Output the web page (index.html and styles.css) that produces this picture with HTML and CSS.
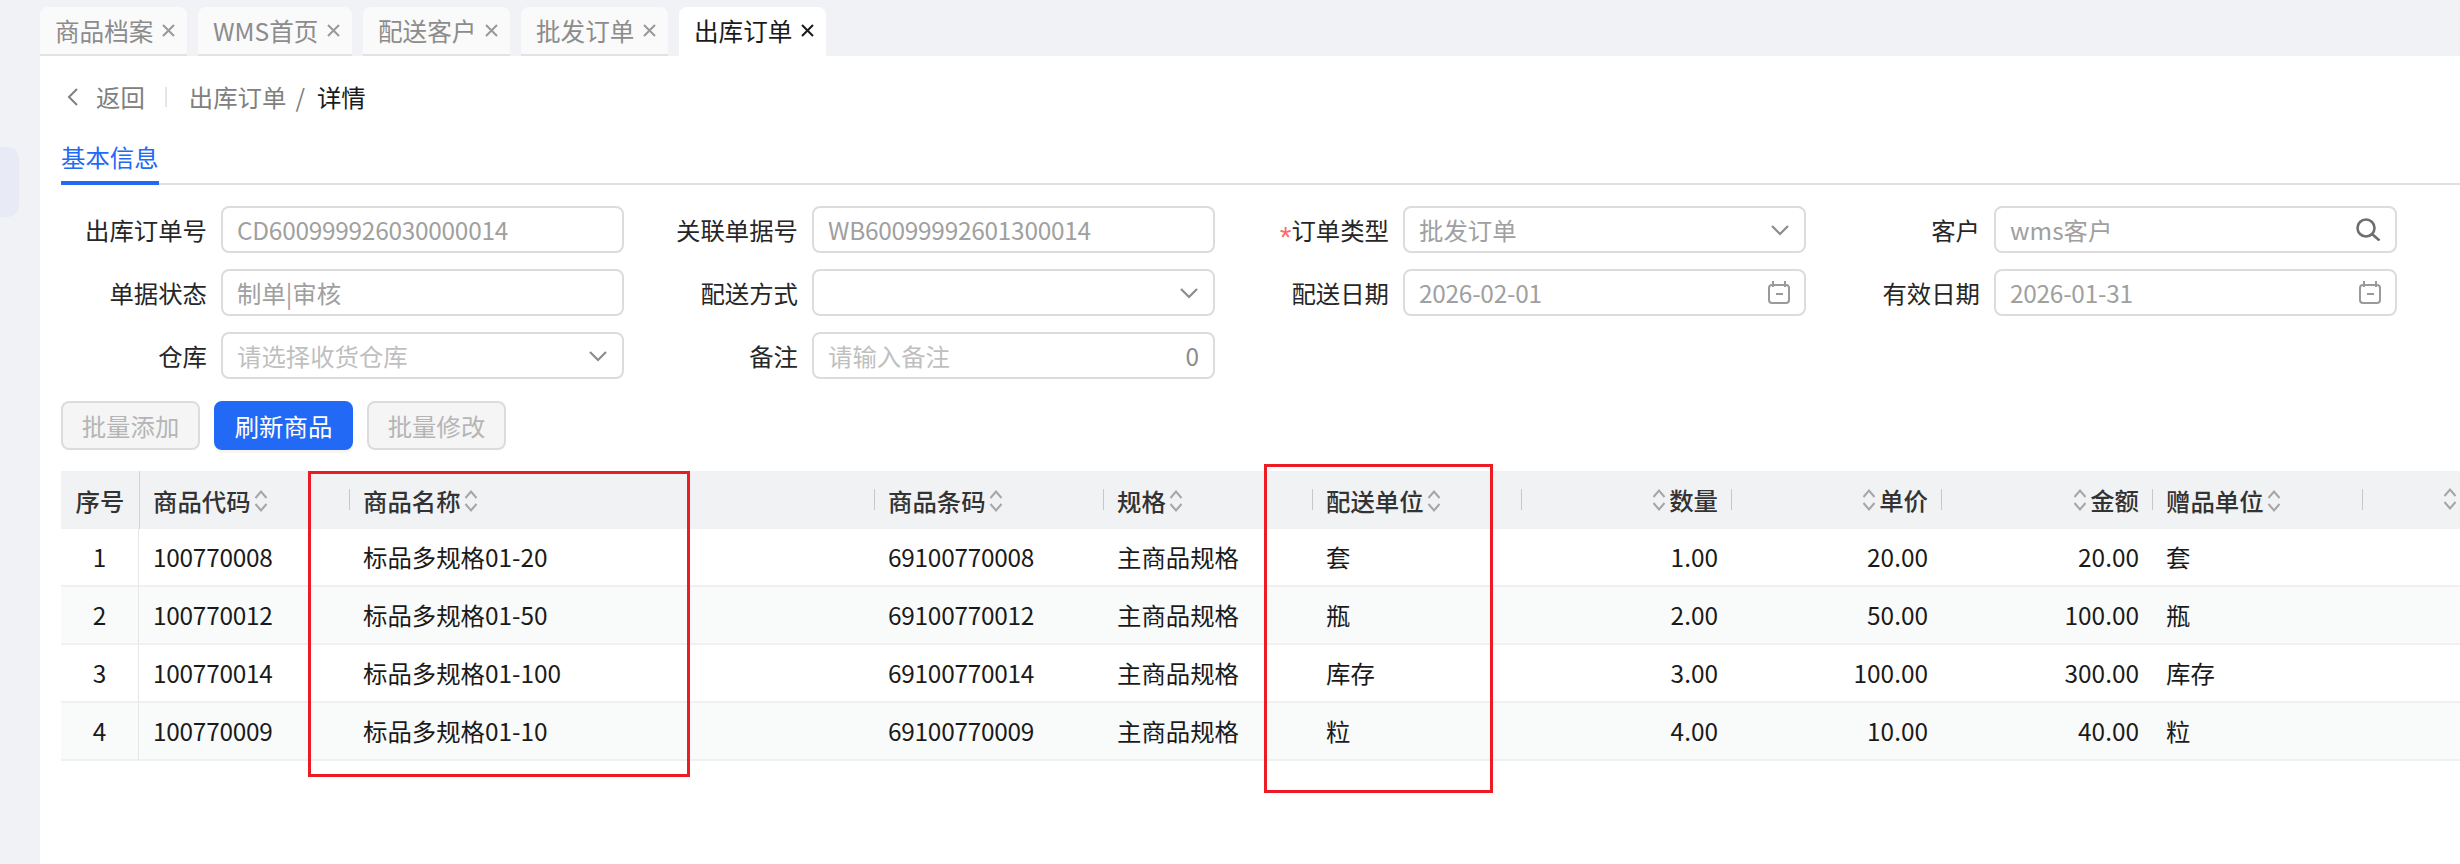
FILE: index.html
```html
<!DOCTYPE html>
<html lang="zh-CN">
<head>
<meta charset="utf-8">
<title>出库订单</title>
<link rel="stylesheet" href="styles.css">
</head>
<body>
<svg class="defs" width="0" height="0" aria-hidden="true">
  <symbol id="x" viewBox="0 0 13 13"><path d="M1 1l11 11M12 1L1 12" fill="none" stroke="currentColor" stroke-width="2"/></symbol>
  <symbol id="chev" viewBox="0 0 20 12"><path d="M2 2l8 8 8-8" fill="none" stroke="currentColor" stroke-width="2.200"/></symbol>
  <symbol id="cal" viewBox="0 0 22 23"><path d="M5 0v6M17 0v6" fill="none" stroke="currentColor" stroke-width="2"/><rect x="1" y="4" width="20" height="18" rx="3" fill="none" stroke="currentColor" stroke-width="2"/><path d="M8 13h7" stroke="currentColor" stroke-width="2"/></symbol>
  <symbol id="search" viewBox="0 0 25 23"><circle cx="10" cy="10" r="8.500" fill="none" stroke="currentColor" stroke-width="2.600"/><path d="M16.500 16.500l7 6" fill="none" stroke="currentColor" stroke-width="2.600"/></symbol>
  <symbol id="sort" viewBox="0 0 14 24"><path d="M1.500 9L7 2.500 12.500 9M1.500 15L7 21.500 12.500 15" fill="none" stroke="currentColor" stroke-width="2"/></symbol>
</svg>
<div class="app">
  <aside class="rail"><div class="rail-card"></div></aside>
  <main class="main">
    <nav class="tabs">
      <div class="tab">商品档案<svg class="tab-x"><use href="#x"/></svg></div>
      <div class="tab">WMS首页<svg class="tab-x"><use href="#x"/></svg></div>
      <div class="tab">配送客户<svg class="tab-x"><use href="#x"/></svg></div>
      <div class="tab">批发订单<svg class="tab-x"><use href="#x"/></svg></div>
      <div class="tab tab-active">出库订单<svg class="tab-x"><use href="#x"/></svg></div>
    </nav>
    <section class="page">
      <div class="crumbs">
        <svg class="back-icon" viewBox="0 0 12 20"><path d="M10 2L2 10l8 8" fill="none" stroke="currentColor" stroke-width="2"/></svg>
        <span class="back">返回</span>
        <span class="crumb-sep"></span>
        <span class="crumb">出库订单</span>
        <span class="crumb-slash">/</span>
        <span class="crumb-now">详情</span>
      </div>
      <div class="subtabs"><span class="subtab">基本信息</span></div>
      <form class="form">
        <div class="field"><label class="label">出库订单号</label><div class="input"><span class="val digits">CD600999926030000014</span></div></div>
        <div class="field"><label class="label">关联单据号</label><div class="input"><span class="val digits">WB60099992601300014</span></div></div>
        <div class="field"><label class="label"><span class="star">*</span>订单类型</label><div class="input"><span class="val">批发订单</span><svg class="chev"><use href="#chev"/></svg></div></div>
        <div class="field"><label class="label">客户</label><div class="input"><span class="val">wms客户</span><svg class="search"><use href="#search"/></svg></div></div>
        <div class="field"><label class="label">单据状态</label><div class="input"><span class="val">制单|审核</span></div></div>
        <div class="field"><label class="label">配送方式</label><div class="input"><span class="val"></span><svg class="chev"><use href="#chev"/></svg></div></div>
        <div class="field"><label class="label">配送日期</label><div class="input"><span class="val digits">2026-02-01</span><svg class="cal"><use href="#cal"/></svg></div></div>
        <div class="field"><label class="label">有效日期</label><div class="input"><span class="val digits">2026-01-31</span><svg class="cal"><use href="#cal"/></svg></div></div>
        <div class="field"><label class="label">仓库</label><div class="input"><span class="ph">请选择收货仓库</span><svg class="chev"><use href="#chev"/></svg></div></div>
        <div class="field"><label class="label">备注</label><div class="input"><span class="ph">请输入备注</span><span class="count">0</span></div></div>
      </form>
      <div class="actions">
        <button class="btn" type="button">批量添加</button>
        <button class="btn btn-primary" type="button">刷新商品</button>
        <button class="btn" type="button">批量修改</button>
      </div>
      <div class="table-wrap">
        <table class="table">
          <colgroup>
            <col class="c-no"><col class="c-code"><col class="c-name"><col class="c-bar"><col class="c-spec"><col class="c-unit"><col class="c-num"><col class="c-num"><col class="c-num2"><col class="c-gift"><col class="c-last">
          </colgroup>
          <thead>
            <tr>
              <th class="no">序号</th>
              <th class="first"><span class="h">商品代码<svg class="sort"><use href="#sort"/></svg></span></th>
              <th><span class="h">商品名称<svg class="sort"><use href="#sort"/></svg></span></th>
              <th><span class="h">商品条码<svg class="sort"><use href="#sort"/></svg></span></th>
              <th><span class="h">规格<svg class="sort"><use href="#sort"/></svg></span></th>
              <th><span class="h">配送单位<svg class="sort"><use href="#sort"/></svg></span></th>
              <th class="num"><span class="h"><svg class="sort"><use href="#sort"/></svg>数量</span></th>
              <th class="num"><span class="h"><svg class="sort"><use href="#sort"/></svg>单价</span></th>
              <th class="num"><span class="h"><svg class="sort"><use href="#sort"/></svg>金额</span></th>
              <th><span class="h">赠品单位<svg class="sort"><use href="#sort"/></svg></span></th>
              <th class="num last"><span class="h"><svg class="sort"><use href="#sort"/></svg></span></th>
            </tr>
          </thead>
          <tbody>
            <tr><td class="no">1</td><td class="digits">100770008</td><td>标品多规格01-20</td><td class="digits">69100770008</td><td>主商品规格</td><td>套</td><td class="num">1.00</td><td class="num">20.00</td><td class="num">20.00</td><td>套</td><td></td></tr>
            <tr><td class="no">2</td><td class="digits">100770012</td><td>标品多规格01-50</td><td class="digits">69100770012</td><td>主商品规格</td><td>瓶</td><td class="num">2.00</td><td class="num">50.00</td><td class="num">100.00</td><td>瓶</td><td></td></tr>
            <tr><td class="no">3</td><td class="digits">100770014</td><td>标品多规格01-100</td><td class="digits">69100770014</td><td>主商品规格</td><td>库存</td><td class="num">3.00</td><td class="num">100.00</td><td class="num">300.00</td><td>库存</td><td></td></tr>
            <tr><td class="no">4</td><td class="digits">100770009</td><td>标品多规格01-10</td><td class="digits">69100770009</td><td>主商品规格</td><td>粒</td><td class="num">4.00</td><td class="num">10.00</td><td class="num">40.00</td><td>粒</td><td></td></tr>
          </tbody>
        </table>
      </div>
    </section>
  </main>
</div>
<div class="mark mark-a"></div>
<div class="mark mark-b"></div>
</body>
</html>
```
FILE: styles.css
```css
* { box-sizing: border-box; }
html, body { margin: 0; padding: 0; height: 864px; overflow: hidden; }
body {
  position: relative;
  background: #f0f2f5;
  color: #1f1f1f;
  font: 400 24.4px/1.3 "Noto Sans CJK SC", "Noto Sans", sans-serif;
}
.defs { position: absolute; }
.app { display: flex; height: 864px; }
.rail { width: 40px; flex: none; padding-top: 147px; }
.rail-card { width: 19px; height: 70px; background: #e8ebf5; border-radius: 0 12px 12px 0; }
.main { flex: 1; min-width: 0; display: flex; flex-direction: column; }
.digits { letter-spacing: -.25px; }

.tabs { display: flex; gap: 11px; height: 56px; padding-top: 7px; flex: none; font-size: 24.6px; }
.tab {
  display: flex; align-items: center; gap: 8.600px;
  padding: 0 12px 0 15px;
  background: #fafafa;
  color: #8c8c8c;
  border-bottom: 2px solid #e2e2e2;
  border-radius: 8px 8px 0 0;
  white-space: nowrap;
}
.tab-x { width: 13px; height: 13px; color: #999; }
.tab-active { background: #fff; color: #1a1a1a; border-bottom-color: #fff; }
.tab-active .tab-x { color: #1a1a1a; }

.page { flex: 1; background: #fff; padding-left: 21px; }
.crumbs { display: flex; align-items: center; height: 82px; padding-bottom: 1px; color: #808080; }
.back-icon { width: 12px; height: 20px; margin-left: 6px; margin-right: 17px; }
.back { margin-right: 20px; }
.crumb-sep { width: 2px; height: 20px; background: #e6e6e6; margin-right: 22px; }
.crumb-slash { margin: 0 12px 0 9px; }
.crumb-now { color: #1a1a1a; }

.subtabs { height: 47px; border-bottom: 2px solid #e0e0e0; }
.subtab {
  display: inline-block; height: 47px; line-height: 38px;
  color: #2269f5; border-bottom: 4px solid #2269f5;
}

.form {
  display: grid;
  grid-template-columns: repeat(4, 563px);
  column-gap: 28px;
  row-gap: 16px;
  padding-top: 21px;
}
.field { display: flex; align-items: center; gap: 14px; height: 47px; }
.label { width: 146px; flex: none; text-align: right; color: #262626; white-space: nowrap; }
.star {
  color: #ff6b6d;
  font: 400 30px/0 "Liberation Sans", sans-serif;
  vertical-align: -7px;
}
.input {
  flex: 1; height: 47px; min-width: 0;
  display: flex; align-items: center; justify-content: space-between;
  padding: 0 14px;
  border: 2px solid #dcdcdc;
  border-radius: 8px;
  color: #a0a0a0;
}
.ph { color: #bfbfbf; }
.count { color: #8c8c8c; }
.chev { width: 20px; height: 12px; color: #8c8c8c; }
.cal { width: 22px; height: 23px; color: #9a9a9a; }
.search { width: 25px; height: 23px; color: #6e6e6e; }

.actions { display: flex; gap: 14px; padding-top: 22px; }
.btn {
  width: 139px; height: 49px; padding: 0;
  font: inherit; color: #b5b5b5;
  background: #f5f5f5;
  border: 2px solid #dcdcdc;
  border-radius: 8px;
}
.btn-primary {
  color: #fff; background: #2269f5; border-color: #2269f5;
  box-shadow: 0 3px 0 rgba(0, 0, 0, .04);
}

.table-wrap { padding-top: 21px; }
.table { border-collapse: separate; border-spacing: 0; table-layout: fixed; width: 2399px; }
.c-no { width: 78px; }
.c-code { width: 210px; }
.c-name { width: 525px; }
.c-bar { width: 229px; }
.c-spec { width: 209px; }
.c-unit { width: 209px; }
.c-num { width: 210px; }
.c-num2 { width: 211px; }
.c-gift { width: 210px; }
.c-last { width: 98px; }
th {
  position: relative;
  height: 58px; padding: 2px 14px 0;
  background: #f1f2f4;
  color: #333;
  font-weight: 500;
  text-align: left;
  white-space: nowrap;
}
th + th::before {
  content: ""; position: absolute; left: 0; top: 18px;
  width: 1px; height: 21px; background: #c4c7cc;
}
th.first::before { top: 0; height: 100%; background: #d0d3d9; }
th.no { padding: 2px 0 0; text-align: center; }
.h { display: inline-flex; align-items: center; gap: 3px; }
th.num .h { justify-content: flex-end; width: 100%; }
th.num { text-align: right; padding-right: 13px; }
th.last { padding-right: 3px; }
.sort { width: 14px; height: 24px; color: #a6a6a6; flex: none; }
td {
  height: 58px; padding: 0 14px;
  border-bottom: 2px solid #f0f0f0;
  color: #1a1a1a;
  white-space: nowrap;
  background: #fff;
}
tbody tr:nth-child(even) td { background: #f9fafa; }
td.no { padding: 0; text-align: center; border-right: 1px solid #e6e6e6; }
td.num { text-align: right; padding-right: 13px; }

.mark { position: absolute; border: 3px solid #ed1c24; pointer-events: none; }
.mark-a { left: 308px; top: 471px; width: 382px; height: 306px; }
.mark-b { left: 1264px; top: 464px; width: 229px; height: 329px; }
```
